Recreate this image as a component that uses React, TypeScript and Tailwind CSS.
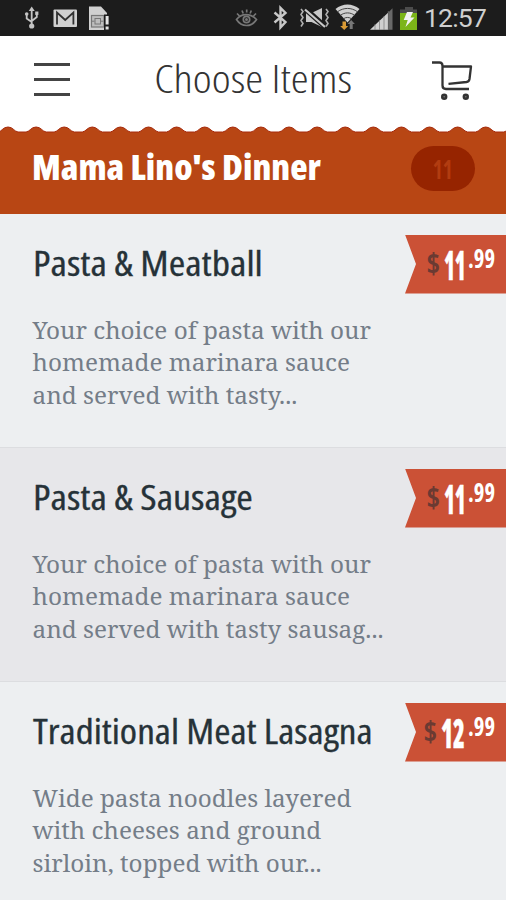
interface MenuItem {
  name: string;
  lines: string[];
  dollars: string;
  cents: string;
}

const items: MenuItem[] = [
  {
    name: 'Pasta & Meatball',
    lines: ['Your choice of pasta with our', 'homemade marinara sauce', 'and served with tasty...'],
    dollars: '11',
    cents: '.99',
  },
  {
    name: 'Pasta & Sausage',
    lines: ['Your choice of pasta with our', 'homemade marinara sauce', 'and served with tasty sausag...'],
    dollars: '11',
    cents: '.99',
  },
  {
    name: 'Traditional Meat Lasagna',
    lines: ['Wide pasta noodles layered', 'with cheeses and ground', 'sirloin, topped with our...'],
    dollars: '12',
    cents: '.99',
  },
];

// scalloped edge: one bump every 28.1px
const PERIOD = 28.1;
const bumps = Array.from({ length: 20 }, (_, i) => 8 + (i - 1) * PERIOD);
const edge =
  'M-34 6 ' +
  bumps
    .map((x) => `L${x - 10} 6 C${x - 6} 5.4 ${x - 5} 1 ${x} 1 C${x + 5} 1 ${x + 6} 5.4 ${x + 10} 6`)
    .join(' ');

const StatusBar = () => (
  <div className="flex h-9 shrink-0 items-start bg-[#1c1c1c] pl-6">
    <svg width="90" height="36" viewBox="0 0 90 36">
      {/* usb */}
      <g fill="none" stroke="#c4c4c4" strokeWidth="1.8">
        <path d="M7.7 9v17M2.7 14v4.5l5 3.5M12.8 13v4l-5 4" />
      </g>
      <path d="M7.7 6.5l3 4.5h-6z" fill="#c4c4c4" />
      <circle cx="7.7" cy="26" r="2.6" fill="#c4c4c4" />
      <circle cx="2.7" cy="14" r="1.8" fill="#c4c4c4" />
      <rect x="11.2" y="11.5" width="3.2" height="3.4" fill="#c4c4c4" />
      {/* mail */}
      <rect x="29.5" y="9.5" width="23.5" height="17.5" rx="1" fill="#d0d0d0" />
      <path d="M33 24.5V12.5l8.2 7.5 8.2-7.5v12" fill="none" stroke="#303030" strokeWidth="1.8" />
      {/* sim card */}
      <path d="M65 6.5h12l6 6.5v17H65z" fill="#d0d0d0" />
      <rect x="67.5" y="15.5" width="12.5" height="11.5" fill="#bdbdbd" stroke="#777" strokeWidth="1.2" />
      <rect x="71" y="18.5" width="5.5" height="5.5" fill="none" stroke="#777" />
      <path d="M67.5 21.2h3M76.5 21.2h3" stroke="#777" />
      <rect x="80" y="14.5" width="6" height="16" fill="#1c1c1c" />
      <path d="M81.6 16h3v8.5h-3zM81.6 26.5h3v3h-3z" fill="#e4e4e4" />
    </svg>
    <svg className="ml-auto" width="188" height="36" viewBox="232 0 188 36">
      {/* eye */}
      <g fill="none" stroke="#777" strokeWidth="1.7">
        <path d="M236.5 19.5c5-6.5 14-6.5 20 0c-5 8-15 8-20 0z" />
        <path d="M237 13.5l2.5 2.5M242 10.5l1.2 3M246.7 9.5v3M251.3 10.5l-1.2 3M256 13.5l-2.5 2.5" />
        <circle cx="246.5" cy="19.5" r="3.2" />
      </g>
      <circle cx="246.5" cy="19.5" r="1.5" fill="#777" />
      {/* bluetooth */}
      <path d="M274.5 12.5l11 9.5-5 5.5V8l5 5-11 9.5" fill="none" stroke="#c8c8c8" strokeWidth="2.4" />
      {/* muted, vibrate */}
      <path d="M306 13h5.5l10.500-5v19l-10.500-5H306z" fill="#c8c8c8" />
      <path d="M306.500 10l19 17" stroke="#1c1c1c" strokeWidth="5.500" />
      <path d="M305 9.500l20 17.500" stroke="#c8c8c8" strokeWidth="2.200" />
      <path
        d="M301 9l2 2.5-2 3 2 3-2 3 2 3-2 3M326 9l2 2.5-2 3 2 3-2 3 2 3-2 3"
        fill="none"
        stroke="#b0b0b0"
        strokeWidth="1.6"
      />
      {/* wifi */}
      <path d="M335.500 9c7-6 17-6 24 0l-12 13.500z" fill="#cfcfcf" />
      <path
        d="M337.500 11.800c6-4.500 14-4.500 20 0M340.500 15.300c4-3.200 10-3.200 14 0M343.500 18.800c2-1.800 6-1.800 8 0"
        fill="none"
        stroke="#444"
        strokeWidth="1"
      />
      <path d="M342.5 21.5h3.5v4.5h2.2l-4 4-4-4h2.3z" fill="#d99a35" />
      <path d="M349.7 29v-5h-2.2l3.7-4 3.7 4h-2.2v5z" fill="#777" />
      {/* signal */}
      <path d="M370 29.8l18-17v17z" fill="#d0d0d0" />
      <path d="M388.5 12.3l4-4v21.5h-4z" fill="#686868" />
      <path d="M375 24v6M379.5 20v10M384 16v14M388.3 11v19" stroke="#777" strokeWidth=".7" />
      {/* battery */}
      <path d="M405 7h8v2.5h4V14h-17V9.5h5z" fill="#4c4c4c" />
      <rect x="400" y="13" width="17" height="17" fill="#7cb518" />
      <path d="M407 12h6l-2.5 5.5h4L405.5 27l2.2-7h-4z" fill="#f2f2f2" />
    </svg>
    <span className="ml-[4px] w-[82px] font-['Roboto'] text-[26.5px] leading-9 tracking-[-0.8px] text-[#cfcfcf]">
      12:57
    </span>
  </div>
);

const Header = () => (
  <header className="flex h-[90px] shrink-0 items-start justify-between bg-white pl-[34px] pr-8">
    <div className="mt-[27px] flex w-9 flex-col gap-3">
      <span className="h-[3px] bg-[#444]" />
      <span className="h-[3px] bg-[#444]" />
      <span className="h-[3px] bg-[#444]" />
    </div>
    <h1 className="ml-[4px] mt-[16px] origin-center scale-x-[1.19] whitespace-nowrap text-[38px] font-light leading-[52px] text-[#333] [font-stretch:75%]">
      Choose Items
    </h1>
    <svg className="mt-6" width="42" height="42" viewBox="0 0 42 42" fill="none" stroke="#333" strokeLinejoin="round">
      <path
        d="M0 2.500h7.500q3 0 3 3.500V25.500q0 3.500 3.500 3.500h23M10.500 6.500h28.500l-1.500 12.500q-.4 2.600-3 3L16.500 23.800"
        strokeWidth="2.300"
      />
      <circle cx="12.2" cy="36.8" r="3.2" fill="#333" stroke="none" />
      <circle cx="33.8" cy="36.8" r="3.2" fill="#333" stroke="none" />
      <circle cx="12.2" cy="36.8" r=".8" fill="#777" stroke="none" />
      <circle cx="33.8" cy="36.8" r=".8" fill="#777" stroke="none" />
    </svg>
  </header>
);

const Section = () => (
  <section className="flex h-[87.5px] shrink-0 flex-col bg-[#b84614]">
    <svg className="block shrink-0" width="506" height="8" viewBox="0 0 506 8">
      <path d={`${edge} L540 6 V-4 H-34 Z`} fill="#fff" />
      <path d={edge} fill="none" stroke="#a62a0c" strokeWidth="1" />
    </svg>
    <div className="flex items-start justify-between pl-[32px] pr-[31px]">
      <h2 className="mt-[9px] origin-left scale-x-[1.02] whitespace-nowrap text-[35px] font-extrabold leading-[48px] text-white [font-stretch:75%]">
        Mama Lino's Dinner
      </h2>
      <span className="mt-[12px] h-[45px] w-16 rounded-full bg-[#962400] text-center text-[27px] font-bold leading-[45px] text-[#b23c10] [font-stretch:75%]">
        <span className="inline-block scale-x-[.78]">11</span>
      </span>
    </div>
  </section>
);

const Price = ({ dollars, cents }: { dollars: string; cents: string }) => (
  <div className="mt-[21px] flex h-[59px] w-[101px] shrink-0 items-start justify-end bg-[#cb5136] pr-[11px] font-bold text-white [clip-path:polygon(0_0,100%_0,100%_100%,0_100%,11px_50%)] [font-stretch:75%]">
    <span className="mr-[4px] mt-[9px] text-[29px] leading-[38px] text-[#6b3a32]">$</span>
    <span
      className={
        dollars === '11'
          ? 'mt-[3px] w-6 text-[40px] font-extrabold leading-[54px]'
          : 'mt-[3px] w-[27px] text-[40px] font-extrabold leading-[54px]'
      }
    >
      <span
        className={
          dollars === '11'
            ? 'inline-block origin-left scale-x-[.54] [-webkit-text-stroke:0.4px_white]'
            : 'inline-block origin-left scale-x-[.6] [-webkit-text-stroke:0.4px_white]'
        }
      >
        {dollars}
      </span>
    </span>
    <span className="mt-[4px] w-[27px] text-[26px] leading-[38px]">
      <span className="inline-block origin-left scale-x-[.87]">{cents}</span>
    </span>
  </div>
);

const App: React.FC = () => {
  return (
    <main className="flex h-[900px] w-[506px] flex-col overflow-hidden font-['Open_Sans',sans-serif]">
      <StatusBar />
      <Header />
      <Section />
      <div className="shrink-0">
        {items.map((item, index) => (
          <article
            key={index}
            className="flex h-[234px] justify-between border-b border-[#dcdde0] bg-[#edeff1] even:bg-[#e7e7ea]"
          >
            <div className="whitespace-nowrap pl-[32.5px]">
              <h3
                className={
                  item.name.length > 20
                    ? 'mt-[26px] w-fit origin-left scale-x-[1.155] text-[34px] font-medium leading-[46px] text-[#263238] [font-stretch:75%] [-webkit-text-stroke:0.3px_#263238]'
                    : 'mt-[26px] w-fit origin-left scale-x-[1.175] text-[34px] font-medium leading-[46px] text-[#263238] [font-stretch:75%] [-webkit-text-stroke:0.3px_#263238]'
                }
              >
                {item.name}
              </h3>
              <p className="mt-[28px] font-['Noto_Serif','DejaVu_Serif',serif] text-[24.3px] leading-[32.6px] text-[#747d88]">
                {item.lines.map((line) => (
                  <span key={line} className="block">
                    {line}
                  </span>
                ))}
              </p>
            </div>
            <Price dollars={item.dollars} cents={item.cents} />
          </article>
        ))}
      </div>
    </main>
  );
};

export default App;
